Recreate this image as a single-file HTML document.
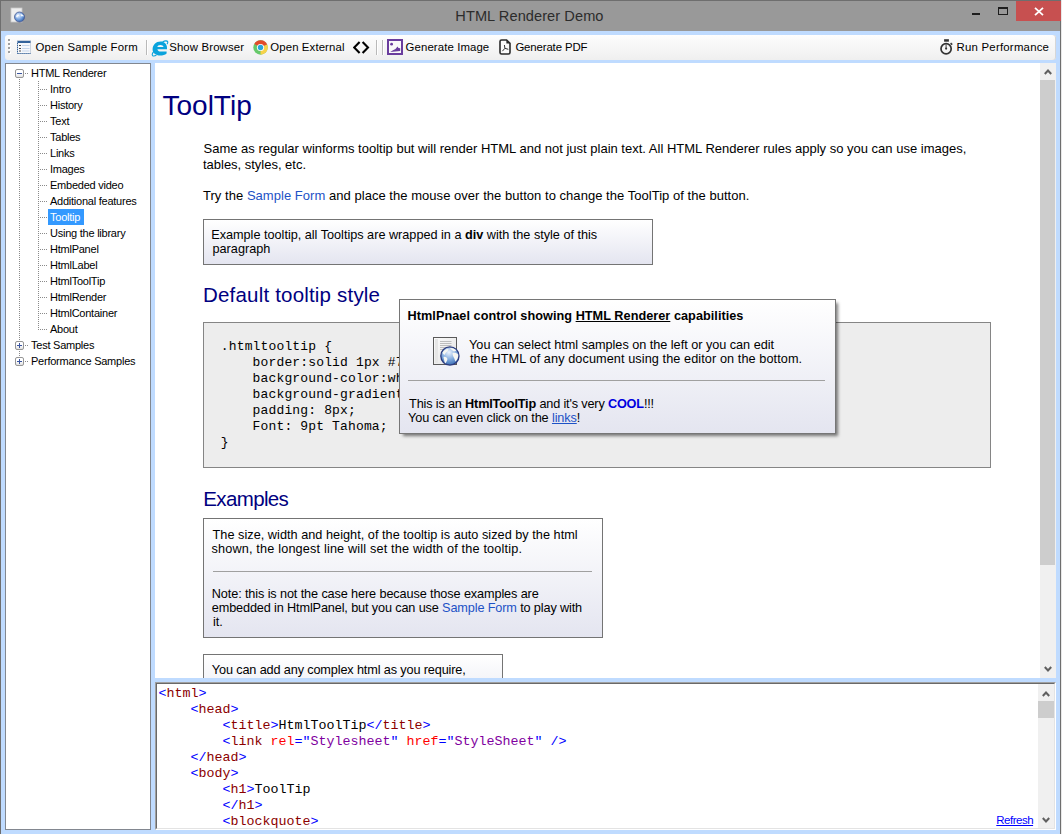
<!DOCTYPE html>
<html><head><meta charset="utf-8">
<style>
*{margin:0;padding:0;box-sizing:border-box}
html,body{width:1062px;height:834px;overflow:hidden}
body{position:relative;background:#e8e8e8;font-family:"Liberation Sans",sans-serif;color:#000}
.a{position:absolute}
.t{position:absolute;white-space:pre;line-height:1}
#win{left:0;top:0;width:1061px;height:834px;background:#bfdbff;border-left:1px solid #6e6e6e;border-right:1px solid #6e6e6e;border-top:1px solid #6e6e6e}
#title{left:1px;top:1px;width:1059px;height:30px;background:#999999}
#toolbar{left:5px;top:35px;width:1051px;height:25px;border-radius:3px;box-shadow:inset -1px 0 0 #d6d6d6;background:linear-gradient(#fefefe,#f9f9f9 25%,#f4f4f4 65%,#efefef)}
#tree{left:5px;top:63px;width:146px;height:767px;background:#fff;border:1px solid #828790}
#content{left:155px;top:63px;width:901px;height:615px;background:#fff;overflow:hidden}
#editor{left:155px;top:682px;width:901px;height:148px;background:#fff;border-top:1px solid #a0a0a0;border-left:1px solid #a0a0a0;border-right:1px solid #fff;border-bottom:1px solid #fff}
#editorin{left:0;top:0;width:899px;height:146px;border-top:1px solid #696969;border-left:1px solid #696969;border-right:1px solid #e3e3e3;border-bottom:1px solid #e3e3e3;overflow:hidden}
.tb{font-size:11.4px;color:#000;top:42px}
.tr{font-size:11px;letter-spacing:-0.24px;color:#000}
.c{font-size:13px;color:#000}
.mono{font-family:"Liberation Mono",monospace;font-size:13px}
.dh{height:1px;background-image:linear-gradient(to right,#8a8a8a 50%,transparent 50%);background-size:2px 1px}
.dv{width:1px;background-image:linear-gradient(to bottom,#8a8a8a 50%,transparent 50%);background-size:1px 2px}
.bx{width:9px;height:9px;border:1px solid #969696;border-radius:2px;background:linear-gradient(#fff 40%,#e2e2e2)}
.qbox{border:1px solid #747474;background:linear-gradient(#fff,#e4e5f0)}
.lnk{color:#1d52c6}
.eb{color:#0000ff}.en{color:#8b0000}.ea{color:#ff0000}.ev{color:#8000a0}
</style></head><body>
<div id="win" class="a"></div>
<div id="title" class="a"></div>
<div class="t" style="left:455.3px;top:9px;font-size:14.6px;color:#2c2c2c;letter-spacing:0.065px">HTML Renderer Demo</div>
<!-- title buttons -->
<svg class="a" style="left:10px;top:7px" width="16" height="16" viewBox="0 0 16 16">
 <defs><radialGradient id="gg2" cx="0.4" cy="0.35" r="0.7"><stop offset="0" stop-color="#e6f0ff"/><stop offset="0.6" stop-color="#6f9ddc"/><stop offset="1" stop-color="#2c5aa0"/></radialGradient></defs>
 <rect x="1" y="1" width="11" height="14" fill="#eeeeee" stroke="#c8c8c8" stroke-width="0.8"/>
 <circle cx="9.5" cy="10" r="5" fill="url(#gg2)" stroke="#4a5a90" stroke-width="0.8"/>
 <path d="M6 9 C7 7.5 8.5 7 9 8 C8.5 9 7.5 9.5 7.5 10.5 C6.8 10.8 6.2 10 6 9 Z M10.5 7 C12 7 13.5 8 14 9.5 C13 9.5 12 9 11.2 9.5 C10.8 8.7 10.6 7.8 10.5 7 Z" fill="#fff" opacity="0.9"/>
</svg>
<div class="a" style="left:1016px;top:1px;width:45px;height:20px;background:#c75050"></div>
<svg class="a" style="left:1034px;top:7px" width="10" height="9" viewBox="0 0 10 9"><path d="M1 0.8 L9 8.2 M9 0.8 L1 8.2" stroke="#fff" stroke-width="1.8"/></svg>
<div class="a" style="left:972px;top:13px;width:8px;height:2px;background:#1e1e1e"></div>
<div class="a" style="left:998px;top:7px;width:10px;height:8px;border:1px solid #1e1e1e;border-top-width:2px"></div>

<div id="toolbar" class="a"></div>

<!-- toolbar items -->
<div class="a" style="left:8px;top:39px;width:2px;height:2px;background:#a0a0a0;box-shadow:1px 1px 0 #fff"></div>
<div class="a" style="left:8px;top:43px;width:2px;height:2px;background:#a0a0a0;box-shadow:1px 1px 0 #fff"></div>
<div class="a" style="left:8px;top:47px;width:2px;height:2px;background:#a0a0a0;box-shadow:1px 1px 0 #fff"></div>
<div class="a" style="left:8px;top:51px;width:2px;height:2px;background:#a0a0a0;box-shadow:1px 1px 0 #fff"></div>
<svg class="a" style="left:17px;top:40px" width="14" height="14" viewBox="0 0 14 14">
 <rect x="0.5" y="0.5" width="13" height="13" fill="#f6f8fb" stroke="#c9d2de" stroke-width="1"/>
 <rect x="0.5" y="1" width="13" height="2" fill="#34639b"/>
 <path d="M0.5 3v10.5M0.5 13.5h13" stroke="#34639b" stroke-width="1" stroke-dasharray="1.2 0.8"/>
 <path d="M2 5.5h2M2 8.5h2M2 11h2" stroke="#4a4a4a" stroke-width="1"/>
 <path d="M5 5.5h7.5M5 8.5h7.5M5 11h7.5" stroke="#c5d5ea" stroke-width="1"/>
</svg>
<div class="t tb" style="left:35.4px;letter-spacing:0.193px">Open Sample Form</div>
<div class="a" style="left:146px;top:40px;width:1px;height:15px;background:#b9b9b9;box-shadow:1px 0 0 #fff"></div>
<svg class="a" style="left:151px;top:39.5px" width="18" height="17" viewBox="0 0 18 17">
 <path d="M11.5 1.9 C13.8 0.7 16.2 0.5 16.7 1.7 C17 2.5 16.6 3.4 16 4.2 M3.2 10.8 C1.4 12.9 0.8 14.8 1.7 15.7 C2.5 16.3 4 16 5.4 15.3" fill="none" stroke="#0aa3dc" stroke-width="1.1"/>
 <path fill-rule="evenodd" fill="#0aa3dc" d="M1.6 9.6 C1.6 5 5 1.6 9.6 1.6 C13.2 1.6 16 4 16 7.8 L16 9.2 L6.4 9.2 C6.7 10.7 7.9 11.6 9.6 11.6 L15.6 11.6 L15.6 13.6 C14.1 15 11.6 15.6 9.2 15.6 C4.7 15.6 1.6 13 1.6 9.6 Z M6.3 7.1 C6.6 5.7 7.7 4.9 9.4 4.9 C11.1 4.9 12.3 5.7 12.6 7.1 Z"/>
</svg>
<div class="t tb" style="left:169.2px;letter-spacing:0.127px">Show Browser</div>
<svg class="a" style="left:252.5px;top:39.5px" width="15" height="15" viewBox="0 0 15 15">
 <circle cx="7.5" cy="7.5" r="7.2" fill="#66c96a"/>
 <path d="M7.5 7.5 L1.3 3.9 A7.2 7.2 0 0 1 14.2 4.6 Z" fill="#e24b2b"/>
 <path d="M7.5 7.5 L14.2 4.6 A7.2 7.2 0 0 1 7.5 14.7 Z" fill="#f7d24a"/>
 <circle cx="7.5" cy="7.5" r="3.6" fill="#fff"/>
 <circle cx="7.5" cy="7.5" r="2.7" fill="#28a6dc"/>
</svg>
<div class="t tb" style="left:270.3px;letter-spacing:0.108px">Open External</div>
<svg class="a" style="left:353px;top:40.5px" width="17" height="13" viewBox="0 0 17 13">
 <path d="M6.6 0.9 L1.2 6.5 L6.6 12.1 M9.6 0.9 L15 6.5 L9.6 12.1" fill="none" stroke="#000" stroke-width="2.1"/>
</svg>
<div class="a" style="left:376px;top:40px;width:1px;height:15px;background:#b9b9b9;box-shadow:1px 0 0 #fff"></div>
<div class="a" style="left:382px;top:40px;width:1px;height:15px;background:#b9b9b9;box-shadow:1px 0 0 #fff"></div>
<svg class="a" style="left:387px;top:39px" width="16" height="16" viewBox="0 0 16 16">
 <rect x="1" y="1" width="14" height="14" fill="#fafafa" stroke="#6a3d9e" stroke-width="2"/>
 <circle cx="4.6" cy="5.2" r="1.4" fill="#6a3d9e"/>
 <path d="M3.2 13 L6 11.2 L8.5 10 L10.5 7.6 L11.5 9 L13.2 9.3 L13.2 12 Z" fill="#6a3d9e"/>
</svg>
<div class="t tb" style="left:405.6px;letter-spacing:0.100px">Generate Image</div>
<svg class="a" style="left:499px;top:39px" width="12" height="16" viewBox="0 0 12 16">
 <path d="M1 2.6 Q1 1 2.6 1 H7.6 L11 4.4 V13.4 Q11 15 9.4 15 H2.6 Q1 15 1 13.4 Z" fill="#fbfbfb" stroke="#2b2b2b" stroke-width="1.6"/>
 <path d="M7.4 1 V4.6 H11 Z" fill="#2b2b2b"/>
 <path d="M5.4 6 L5.9 9.3 L9.3 10.3 M5.9 9.3 L3.4 12.2" fill="none" stroke="#333" stroke-width="1"/>
</svg>
<div class="t tb" style="left:515.4px;letter-spacing:-0.127px">Generate PDF</div>
<svg class="a" style="left:940px;top:39px" width="14" height="16" viewBox="0 0 14 16">
 <rect x="4.1" y="0.2" width="4.8" height="2.5" fill="#333"/>
 <circle cx="6.1" cy="9.7" r="5.1" fill="none" stroke="#333" stroke-width="1.7"/>
 <path d="M6.1 5.5 L6.1 9" stroke="#333" stroke-width="0.9"/>
 <circle cx="6.1" cy="9.6" r="1.1" fill="#333"/>
 <path d="M10.6 4.2 L12.2 5.6" stroke="#333" stroke-width="1.6"/>
</svg>
<div class="t tb" style="left:956.6px;letter-spacing:0.221px">Run Performance</div>
<div id="tree" class="a"></div>
<div class="t tr" style="left:31px;top:67.6px">HTML Renderer</div>
<div class="t tr" style="left:50px;top:83.6px">Intro</div>
<div class="a dh" style="left:40px;top:89px;width:8px"></div>
<div class="t tr" style="left:50px;top:99.6px">History</div>
<div class="a dh" style="left:40px;top:105px;width:8px"></div>
<div class="t tr" style="left:50px;top:115.6px">Text</div>
<div class="a dh" style="left:40px;top:121px;width:8px"></div>
<div class="t tr" style="left:50px;top:131.6px">Tables</div>
<div class="a dh" style="left:40px;top:137px;width:8px"></div>
<div class="t tr" style="left:50px;top:147.6px">Links</div>
<div class="a dh" style="left:40px;top:153px;width:8px"></div>
<div class="t tr" style="left:50px;top:163.6px">Images</div>
<div class="a dh" style="left:40px;top:169px;width:8px"></div>
<div class="t tr" style="left:50px;top:179.6px">Embeded video</div>
<div class="a dh" style="left:40px;top:185px;width:8px"></div>
<div class="t tr" style="left:50px;top:195.6px">Additional features</div>
<div class="a dh" style="left:40px;top:201px;width:8px"></div>
<div class="a" style="left:48px;top:209px;width:36px;height:16px;background:#3399ff"></div>
<div class="t tr" style="left:50px;top:211.6px;color:#fff">Tooltip</div>
<div class="a dh" style="left:40px;top:217px;width:8px"></div>
<div class="t tr" style="left:50px;top:227.6px">Using the library</div>
<div class="a dh" style="left:40px;top:233px;width:8px"></div>
<div class="t tr" style="left:50px;top:243.6px">HtmlPanel</div>
<div class="a dh" style="left:40px;top:249px;width:8px"></div>
<div class="t tr" style="left:50px;top:259.6px">HtmlLabel</div>
<div class="a dh" style="left:40px;top:265px;width:8px"></div>
<div class="t tr" style="left:50px;top:275.6px">HtmlToolTip</div>
<div class="a dh" style="left:40px;top:281px;width:8px"></div>
<div class="t tr" style="left:50px;top:291.6px">HtmlRender</div>
<div class="a dh" style="left:40px;top:297px;width:8px"></div>
<div class="t tr" style="left:50px;top:307.6px">HtmlContainer</div>
<div class="a dh" style="left:40px;top:313px;width:8px"></div>
<div class="t tr" style="left:50px;top:323.6px">About</div>
<div class="a dh" style="left:40px;top:329px;width:8px"></div>
<div class="t tr" style="left:31px;top:339.6px">Test Samples</div>
<div class="t tr" style="left:31px;top:355.6px">Performance Samples</div>
<div class="a dv" style="left:19px;top:79px;height:262px"></div>
<div class="a dv" style="left:19px;top:351px;height:6px"></div>
<div class="a dv" style="left:38px;top:81px;height:249px"></div>
<div class="a dh" style="left:25px;top:73px;width:4px"></div>
<div class="a dh" style="left:25px;top:345px;width:4px"></div>
<div class="a dh" style="left:25px;top:361px;width:4px"></div>
<div class="a bx" style="left:15px;top:69px"><div class="a" style="left:1px;top:3px;width:5px;height:1px;background:#3a55a0"></div></div>
<div class="a bx" style="left:15px;top:341px"><div class="a" style="left:1px;top:3px;width:5px;height:1px;background:#3a55a0"></div><div class="a" style="left:3px;top:1px;width:1px;height:5px;background:#3a55a0"></div></div>
<div class="a bx" style="left:15px;top:357px"><div class="a" style="left:1px;top:3px;width:5px;height:1px;background:#3a55a0"></div><div class="a" style="left:3px;top:1px;width:1px;height:5px;background:#3a55a0"></div></div>
<div id="content" class="a"><div class="a" style="left:-155px;top:-63px;width:1062px;height:834px"><div class="t" style="left:162.5px;top:92.30px;font-size:28px;color:#000080;">ToolTip</div>
<div class="t" style="left:203.5px;top:142.0px;font-size:13.00px;color:#000;">Same as regular winforms tooltip but will render HTML and not just plain text. All HTML Renderer rules apply so you can use images,</div>
<div class="t" style="left:203.0px;top:158.0px;font-size:13.00px;color:#000;letter-spacing:-0.016px">tables, styles, etc.</div>
<div class="t" style="left:203.0px;top:189.0px;font-size:13.00px;color:#000;letter-spacing:0.038px">Try the <span class="lnk">Sample Form</span> and place the mouse over the button to change the ToolTip of the button.</div>
<div class="a qbox" style="left:203px;top:219px;width:450px;height:46px"></div>
<div class="t" style="left:211.2px;top:228.7px;font-size:12.70px;color:#000;letter-spacing:-0.013px;">Example tooltip, all Tooltips are wrapped in a <b>div</b> with the style of this</div>
<div class="t" style="left:212.5px;top:242.7px;font-size:12.70px;color:#000;">paragraph</div>
<div class="t" style="left:203px;top:284.65px;font-size:20.5px;color:#000080;letter-spacing:0.19px">Default tooltip style</div>
<div class="a" style="left:203px;top:322px;width:788px;height:146px;background:#ededed;border:1px solid #858585"></div>
<div class="t" style="left:220.8px;top:339.7px;font-size:13.00px;color:#000;font-family:'Liberation Mono',monospace;letter-spacing:0.15px;">.htmltooltip {</div>
<div class="t" style="left:220.8px;top:355.7px;font-size:13.00px;color:#000;font-family:'Liberation Mono',monospace;letter-spacing:0.15px;">    border:solid 1px #767676;</div>
<div class="t" style="left:220.8px;top:371.7px;font-size:13.00px;color:#000;font-family:'Liberation Mono',monospace;letter-spacing:0.15px;">    background-color:white;</div>
<div class="t" style="left:220.8px;top:387.7px;font-size:13.00px;color:#000;font-family:'Liberation Mono',monospace;letter-spacing:0.15px;">    background-gradient:#E4E5F0;</div>
<div class="t" style="left:220.8px;top:403.7px;font-size:13.00px;color:#000;font-family:'Liberation Mono',monospace;letter-spacing:0.15px;">    padding: 8px;</div>
<div class="t" style="left:220.8px;top:419.7px;font-size:13.00px;color:#000;font-family:'Liberation Mono',monospace;letter-spacing:0.15px;">    Font: 9pt Tahoma;</div>
<div class="t" style="left:220.8px;top:435.7px;font-size:13.00px;color:#000;font-family:'Liberation Mono',monospace;letter-spacing:0.15px;">}</div>
<div class="a qbox" style="left:399px;top:299px;width:437px;height:135px;border-color:#767676;box-shadow:3px 3px 3px -1px rgba(0,0,0,0.5)"></div>
<div class="t" style="left:407.6px;top:310.2px;font-size:12.70px;color:#000;letter-spacing:0.037px;font-weight:bold">HtmlPnael control showing <u>HTML Renderer</u> capabilities</div>
<svg class="a" style="left:433px;top:337px" width="30" height="30" viewBox="0 0 30 30">
 <defs>
  <linearGradient id="pg" x1="0" y1="0" x2="1" y2="1"><stop offset="0" stop-color="#fbfbfb"/><stop offset="1" stop-color="#e2e2e2"/></linearGradient>
  <radialGradient id="gg" cx="0.45" cy="0.3" r="0.75"><stop offset="0" stop-color="#eef5ff"/><stop offset="0.55" stop-color="#7ea8dc"/><stop offset="1" stop-color="#2f63ad"/></radialGradient>
 </defs>
 <rect x="0.5" y="0.5" width="23" height="27" fill="url(#pg)" stroke="#5a5a5a" stroke-width="1"/>
 <rect x="2" y="2" width="3" height="24" fill="#e6e6e6"/>
 <path d="M7 4.5h11.5M7 6.5h11.5M7 8.5h11.5M7 10.5h11.5M7 12.5h8" stroke="#b0b0b0" stroke-width="0.8"/>
 <circle cx="16.9" cy="19" r="9.1" fill="url(#gg)" stroke="#2b3b7e" stroke-width="1.3"/>
 <path d="M9.5 15.5 C11 13 13.5 11.5 15.5 12 L14.5 14.5 C13 15 12 16.5 11.5 18 C10.5 17.5 9.8 16.5 9.5 15.5 Z M17 11 C19.5 10.8 22 12 23.5 13.5 L21 14.5 C19.5 13.5 18 12.5 17 11 Z M19.5 16 C21.5 15.5 24 16 25.2 17.5 C25.5 20 24.5 22.5 22.5 24.5 C21.5 23 21.5 21 20.5 20 C19.8 18.8 19.5 17.5 19.5 16 Z M10.5 20 C12 19.5 14 20.5 14.5 22 C14 24 13 25.5 12.2 26.5 C11.5 25 11 23 10.5 20 Z" fill="#f7f7f2"/>
</svg>
<div class="t" style="left:469.1px;top:338.7px;font-size:12.70px;color:#000;letter-spacing:-0.026px;">You can select html samples on the left or you can edit</div>
<div class="t" style="left:470.0px;top:352.7px;font-size:12.70px;color:#000;letter-spacing:0.084px;">the HTML of any document using the editor on the bottom.</div>
<div class="a" style="left:408px;top:380px;width:417px;height:1px;background:#a0a0a0"></div>
<div class="t" style="left:409.1px;top:397.5px;font-size:12.70px;color:#000;letter-spacing:-0.167px;">This is an <b>HtmlToolTip</b> and it's very <b style="color:#0000e0">COOL</b>!!!</div>
<div class="t" style="left:408.1px;top:411.5px;font-size:12.70px;color:#000;letter-spacing:-0.119px;">You can even click on the <u class="lnk">links</u>!</div>
<div class="t" style="left:203.3px;top:488.65px;font-size:20.5px;color:#000080;letter-spacing:-0.64px">Examples</div>
<div class="a qbox" style="left:203px;top:518px;width:400px;height:120px"></div>
<div class="t" style="left:212.6px;top:529.2px;font-size:12.70px;color:#000;letter-spacing:0.027px;">The size, width and height, of the tooltip is auto sized by the html</div>
<div class="t" style="left:211.5px;top:543.2px;font-size:12.70px;color:#000;letter-spacing:0.163px;">shown, the longest line will set the width of the tooltip.</div>
<div class="a" style="left:213px;top:571px;width:379px;height:1px;background:#a0a0a0"></div>
<div class="t" style="left:211.8px;top:588.2px;font-size:12.70px;color:#000;letter-spacing:-0.116px;">Note: this is not the case here because those examples are</div>
<div class="t" style="left:211.8px;top:602.2px;font-size:12.70px;color:#000;letter-spacing:-0.135px;">embedded in HtmlPanel, but you can use <span class="lnk">Sample Form</span> to play with</div>
<div class="t" style="left:213.0px;top:615.7px;font-size:12.70px;color:#000;">it.</div>
<div class="a qbox" style="left:203px;top:654px;width:300px;height:60px"></div>
<div class="t" style="left:211.8px;top:664.2px;font-size:12.70px;color:#000;letter-spacing:-0.135px;">You can add any complex html as you require,</div></div>
<div class="a" style="left:885px;top:0;width:16px;height:615px;background:#f0f0f0"></div>
<div class="a" style="left:885px;top:17px;width:15px;height:485px;background:#cdcdcd"></div>
<svg class="a" style="left:889px;top:5px" width="8" height="7" viewBox="0 0 8 7"><path d="M0.8 6 L4 2.5 L7.2 6" fill="none" stroke="#606060" stroke-width="2"/></svg>
<svg class="a" style="left:889px;top:603px" width="8" height="7" viewBox="0 0 8 7"><path d="M0.8 1 L4 4.5 L7.2 1" fill="none" stroke="#606060" stroke-width="2"/></svg></div>
<div id="editor" class="a"><div id="editorin" class="a"><div class="t" style="left:1.5px;top:3.3px;font-size:13.33px;font-family:'Liberation Mono',monospace"><span class="eb">&lt;</span><span class="en">html</span><span class="eb">&gt;</span></div>
<div class="t" style="left:1.5px;top:19.3px;font-size:13.33px;font-family:'Liberation Mono',monospace">    <span class="eb">&lt;</span><span class="en">head</span><span class="eb">&gt;</span></div>
<div class="t" style="left:1.5px;top:35.3px;font-size:13.33px;font-family:'Liberation Mono',monospace">        <span class="eb">&lt;</span><span class="en">title</span><span class="eb">&gt;</span>HtmlToolTip<span class="eb">&lt;/</span><span class="en">title</span><span class="eb">&gt;</span></div>
<div class="t" style="left:1.5px;top:51.3px;font-size:13.33px;font-family:'Liberation Mono',monospace">        <span class="eb">&lt;</span><span class="en">link</span> <span class="ea">rel</span><span class="eb">=</span><span class="eb">"</span><span class="ev">Stylesheet</span><span class="eb">"</span> <span class="ea">href</span><span class="eb">=</span><span class="eb">"</span><span class="ev">StyleSheet</span><span class="eb">"</span> <span class="eb">/&gt;</span></div>
<div class="t" style="left:1.5px;top:67.3px;font-size:13.33px;font-family:'Liberation Mono',monospace">    <span class="eb">&lt;/</span><span class="en">head</span><span class="eb">&gt;</span></div>
<div class="t" style="left:1.5px;top:83.3px;font-size:13.33px;font-family:'Liberation Mono',monospace">    <span class="eb">&lt;</span><span class="en">body</span><span class="eb">&gt;</span></div>
<div class="t" style="left:1.5px;top:99.3px;font-size:13.33px;font-family:'Liberation Mono',monospace">        <span class="eb">&lt;</span><span class="en">h1</span><span class="eb">&gt;</span>ToolTip</div>
<div class="t" style="left:1.5px;top:115.3px;font-size:13.33px;font-family:'Liberation Mono',monospace">        <span class="eb">&lt;/</span><span class="en">h1</span><span class="eb">&gt;</span></div>
<div class="t" style="left:1.5px;top:131.3px;font-size:13.33px;font-family:'Liberation Mono',monospace">        <span class="eb">&lt;</span><span class="en">blockquote</span><span class="eb">&gt;</span></div>
<div class="a" style="left:881px;top:0;width:16px;height:144px;background:#f0f0f0"></div>
<div class="a" style="left:881px;top:17px;width:16px;height:17px;background:#cdcdcd"></div>
<svg class="a" style="left:885px;top:6px" width="8" height="7" viewBox="0 0 8 7"><path d="M0.8 6 L4 2.5 L7.2 6" fill="none" stroke="#606060" stroke-width="2"/></svg>
<svg class="a" style="left:885px;top:133px" width="8" height="7" viewBox="0 0 8 7"><path d="M0.8 1 L4 4.5 L7.2 1" fill="none" stroke="#606060" stroke-width="2"/></svg>
<div class="t" style="left:839.3px;top:131.2px;font-size:11.5px;letter-spacing:-0.5px;color:#0000ff;text-decoration:underline">Refresh</div></div></div>
</body></html>
